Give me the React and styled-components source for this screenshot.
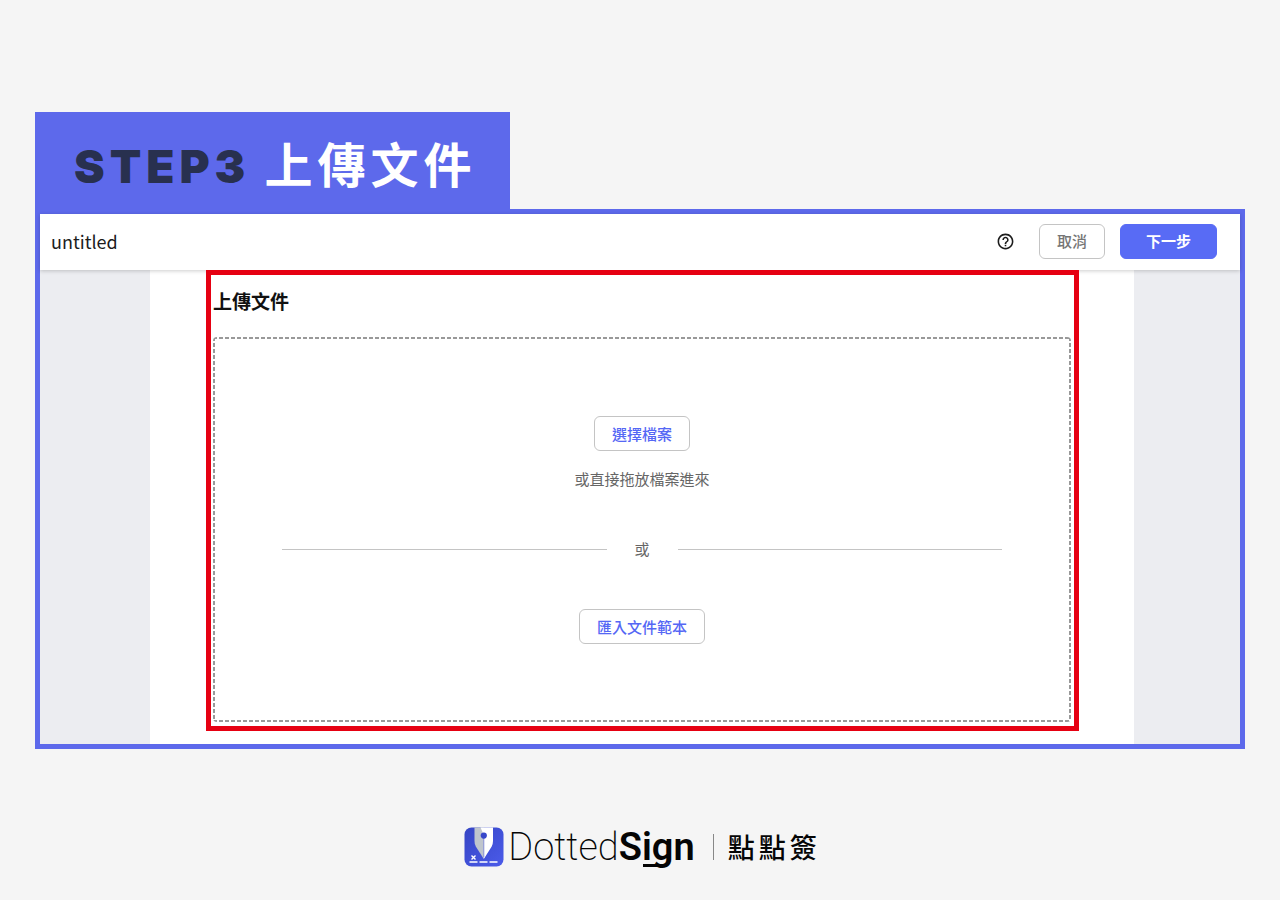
import React from "react";
import styled, { createGlobalStyle } from "styled-components";
import { MdHelpOutline } from "react-icons/md";

const GlobalStyle = createGlobalStyle`
  * {
    box-sizing: border-box;
  }

  body {
    margin: 0;
    background: #f5f5f5;
    font-family: "Noto Sans CJK TC", "Noto Sans", sans-serif;
  }
`;

const Page = styled.main`
  display: flex;
  flex-direction: column;
  padding: 112px 35px 32px;
`;

const StepTab = styled.h1`
  align-self: flex-start;
  display: flex;
  align-items: center;
  gap: 14px;
  height: 97px;
  margin: 0;
  padding: 2px 34px 0 39px;
  background: #5d69eb;
  color: #fff;
  font-size: 48px;
  line-height: 64px;
  font-weight: 700;
  letter-spacing: 5px;
  white-space: nowrap;
`;

const StepNumber = styled.span`
  padding-top: 8px;
  color: #28304f;
  font-family: Inter, sans-serif;
  font-size: 46px;
  font-weight: 900;
`;

const Window = styled.section`
  border: 5px solid #5d69eb;
  background: #ecedf1;
`;

const TopBar = styled.header`
  position: relative;
  display: flex;
  align-items: center;
  height: 56px;
  padding: 0 23px 2px 11px;
  background: #fff;
  box-shadow: 0 1px 4px rgba(0, 0, 0, 0.2);
`;

const FileName = styled.div`
  flex: 1;
  color: #1c1c1c;
  font-size: 18px;
  font-weight: 400;
`;

const Actions = styled.div`
  display: flex;
  align-items: center;
  gap: 15px;
`;

const HelpButton = styled.button`
  display: flex;
  margin-right: 9px;
  padding: 0;
  border: 0;
  background: none;
  color: #1c1c1c;
`;

const Button = styled.button`
  height: 35px;
  padding: 0 17px;
  border: 1px solid #c4c4c4;
  border-radius: 6px;
  background: #fff;
  color: ${({ $muted }) => ($muted ? "#757575" : "#5567f5")};
  font-family: inherit;
  font-size: 15px;
  font-weight: 500;
  line-height: 24px;
  white-space: nowrap;
`;

const PrimaryButton = styled(Button)`
  padding: 0 25px;
  border-color: #586bf5;
  background: #586bf5;
  color: #fff;
  font-weight: 700;
`;

const Sheet = styled.div`
  margin: 0 106px 0 110px;
  padding: 0 55px 13px 56px;
  background: #fff;
`;

const Highlight = styled.section`
  position: relative;
  padding: 12px 3px 4px 2px;
  border: 5px solid #e60012;
`;

const Title = styled.h2`
  margin: 0 0 22px;
  color: #111;
  font-size: 19px;
  line-height: 28px;
  font-weight: 700;
`;

const dashX = "repeating-linear-gradient(90deg, #999 0 4px, transparent 4px 6px)";
const dashY = "repeating-linear-gradient(180deg, #999 0 4px, transparent 4px 6px)";

const DropZone = styled.div`
  display: flex;
  flex-direction: column;
  align-items: center;
  padding: 79px 69px 78px;
  border-radius: 4px;
  background:
    ${dashX} top / 100% 2px no-repeat,
    ${dashX} bottom / 100% 2px no-repeat,
    ${dashY} left / 2px 100% no-repeat,
    ${dashY} right / 2px 100% no-repeat;
`;

const Hint = styled.p`
  margin: 16px 0 0;
  color: #666;
  font-size: 15px;
  line-height: 24px;
`;

const Divider = styled.div`
  align-self: stretch;
  display: flex;
  align-items: center;
  gap: 28px;
  margin: 46px 0 48px;
  color: #666;
  font-size: 15px;
  line-height: 24px;

  &::before,
  &::after {
    content: "";
    flex: 1;
    height: 1px;
    background: #c4c4c4;
  }
`;

const Brand = styled.footer`
  display: flex;
  align-items: center;
  justify-content: center;
  margin-top: 78px;
  padding-left: 5px;
  color: #050505;
`;

const Wordmark = styled.div`
  display: flex;
  align-items: baseline;
  margin-left: 4px;
  font-family: Roboto, sans-serif;
  font-size: 38px;
  line-height: 40px;
  font-weight: 200;
`;

const WordmarkBold = styled.span`
  position: relative;
  font-weight: 600;

  &::after {
    content: "";
    position: absolute;
    left: 24px;
    bottom: 0;
    width: 24px;
    height: 3px;
    border-radius: 0 0 3px 0;
    background: #050505;
  }
`;

const BrandLocal = styled.div`
  margin-left: 18px;
  padding-left: 14px;
  border-left: 1px solid #888;
  font-size: 27px;
  line-height: 26px;
  font-weight: 500;
  letter-spacing: 4px;
`;

const LogoMark = () => (
  <svg width="40" height="40" viewBox="0 0 40 40" aria-hidden="true">
    <defs>
      <linearGradient id="mark" x1="0" y1="0" x2="1" y2="1">
        <stop offset="0" stopColor="#3545c4" />
        <stop offset="1" stopColor="#4b5bea" />
      </linearGradient>
    </defs>
    <rect x="0.5" y="0.5" width="39" height="39" rx="7" fill="url(#mark)" />
    <path d="M10.500 .5H19.800V32L11.800 19.500Q10.500 17 10.500 14z" fill="#bfc5cd" />
    <path d="M16.500 .5H29V14Q29 17 27.700 19.500L19.800 32V8z" fill="#fff" />
    <path d="M19.300 9h1v21h-1z" fill="#8c95d6" />
    <circle cx="19.800" cy="8.600" r="3.100" fill="#3747c9" />
    <path d="M7.500 28.500l4 4M11.500 28.500l-4 4" stroke="#fff" strokeWidth="1.400" />
    <path d="M5.500 35h8M15.500 35h8M25.500 35h8" stroke="#fff" strokeWidth="1.300" />
  </svg>
);

const App = () => {
  return (
    <>
      <GlobalStyle />
      <Page>
        <StepTab>
          <StepNumber>STEP3</StepNumber>
          <span>上傳文件</span>
        </StepTab>
        <Window>
          <TopBar>
            <FileName>untitled</FileName>
            <Actions>
              <HelpButton type="button" aria-label="help">
                <MdHelpOutline size={19} />
              </HelpButton>
              <Button type="button" $muted>取消</Button>
              <PrimaryButton type="button">下一步</PrimaryButton>
            </Actions>
          </TopBar>
          <Sheet>
            <Highlight>
              <Title>上傳文件</Title>
              <DropZone>
                <Button type="button">選擇檔案</Button>
                <Hint>或直接拖放檔案進來</Hint>
                <Divider>或</Divider>
                <Button type="button">匯入文件範本</Button>
              </DropZone>
            </Highlight>
          </Sheet>
        </Window>
        <Brand>
          <LogoMark />
          <Wordmark>
            Dotted<WordmarkBold>Sign</WordmarkBold>
          </Wordmark>
          <BrandLocal>點點簽</BrandLocal>
        </Brand>
      </Page>
    </>
  );
};

export default App;
